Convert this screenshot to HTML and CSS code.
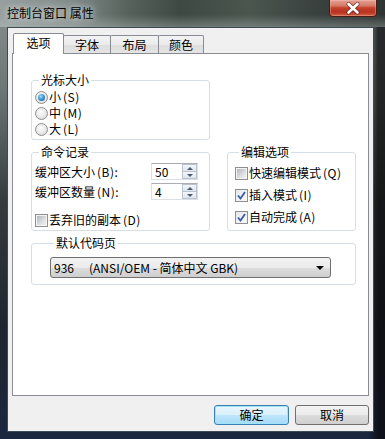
FILE: index.html
```html
<!DOCTYPE html>
<html lang="zh-CN">
<head>
<meta charset="utf-8">
<title>控制台窗口 属性</title>
<link rel="stylesheet" href="styles.css">
</head>
<body>
<div class="window">
  <div class="titlebar">
    <span class="title">控制台窗口 属性</span>
    <div class="close">
      <svg width="46" height="17" viewBox="0 0 46 17">
        <path d="M18.5 4 L27.5 12.5 M27.5 4 L18.5 12.5" stroke="#3a1610" stroke-width="4.2" stroke-linecap="round" fill="none" opacity="0.6"/>
        <path d="M18.5 4 L27.5 12.5 M27.5 4 L18.5 12.5" stroke="#ffffff" stroke-width="2.6" stroke-linecap="round" fill="none"/>
      </svg>
    </div>
  </div>
  <div class="client">
    <div class="tabs">
      <div class="tab active">选项</div>
      <div class="tab w47">字体</div>
      <div class="tab w48">布局</div>
      <div class="tab w45">颜色</div>
    </div>
    <div class="panel">
      <fieldset class="group g-cursor">
        <legend>光标大小</legend>
        <div class="opt"><span class="radio checked"></span>小<span class="key">(S)</span></div>
        <div class="opt"><span class="radio"></span>中<span class="key">(M)</span></div>
        <div class="opt"><span class="radio"></span>大<span class="key">(L)</span></div>
      </fieldset>
      <fieldset class="group g-history">
        <legend>命令记录</legend>
        <div class="field">
          <span class="flabel">缓冲区大小<span class="key">(B)</span>:</span>
          <span class="spin"><span class="num">50</span><span class="arrows"><span class="half"><span class="tri up"></span></span><span class="half"><span class="tri down"></span></span></span></span>
        </div>
        <div class="field">
          <span class="flabel">缓冲区数量<span class="key">(N)</span>:</span>
          <span class="spin"><span class="num">4</span><span class="arrows"><span class="half"><span class="tri up"></span></span><span class="half"><span class="tri down"></span></span></span></span>
        </div>
        <div class="opt discard"><span class="check"></span>丢弃旧的副本<span class="key">(D)</span></div>
      </fieldset>
      <fieldset class="group g-edit">
        <legend>编辑选项</legend>
        <div class="opt erow"><span class="check"></span>快速编辑模式<span class="key">(Q)</span></div>
        <div class="opt erow"><span class="check checked"><svg width="9" height="9" viewBox="0 0 9 9"><path d="M1 4.5 L3.5 7.5 L8 1" stroke="#3a5aa8" stroke-width="1.8" fill="none"/></svg></span>插入模式<span class="key">(I)</span></div>
        <div class="opt erow"><span class="check checked"><svg width="9" height="9" viewBox="0 0 9 9"><path d="M1 4.5 L3.5 7.5 L8 1" stroke="#3a5aa8" stroke-width="1.8" fill="none"/></svg></span>自动完成<span class="key">(A)</span></div>
      </fieldset>
      <fieldset class="group g-codepage">
        <legend>默认代码页</legend>
        <div class="select"><span class="cp">936</span><span class="cpname">(ANSI/OEM - 简体中文 GBK)</span><span class="caret"></span></div>
      </fieldset>
    </div>
    <div class="buttons">
      <div class="btn default">确定</div>
      <div class="btn">取消</div>
    </div>
  </div>
</div>
</body>
</html>
```
FILE: styles.css
```css
html, body {
  margin: 0;
  padding: 0;
}
body {
  width: 385px;
  height: 439px;
  overflow: hidden;
  font-family: "Noto Sans CJK SC", "Noto Sans", sans-serif;
  font-size: 12px;
  color: #000;
  background: #1c2433;
}
.window {
  width: 385px;
  height: 439px;
  display: flex;
  flex-direction: column;
  background:
    linear-gradient(to right, rgba(0,0,0,0) 0, rgba(0,0,0,0) 368px, rgba(10,10,12,0.75) 378px),
    linear-gradient(to bottom, #88918f 0, #6d7676 90px, #353b3e 200px, #1f2530 330px, #1b2740 100%);
}
.titlebar {
  height: 27px;
  flex: none;
  display: flex;
  justify-content: space-between;
  align-items: flex-start;
  padding: 0 8px 0 6px;
  background:
    linear-gradient(to bottom, rgba(255,255,255,0) 55%, rgba(190,200,198,0.35) 100%),
    linear-gradient(to right, #97a09f 0, #828c8a 70px, #56615b 130px, #3e4943 180px, #4b564f 250px, #3b4341 310px, #2e3432 100%);
}
.title {
  line-height: 26px;
  padding-left: 1px;
  text-shadow: 0 0 6px rgba(235,240,240,0.85), 0 0 10px rgba(235,240,240,0.6);
}
.close {
  width: 48px;
  height: 18px;
  box-sizing: border-box;
  margin-top: -1px;
  border: 1px solid #4a1c16;
  border-radius: 0 0 4px 4px;
  background: linear-gradient(to bottom, #e2a396 0, #d77a66 35%, #c2402c 50%, #b83221 75%, #d0603c 100%);
  box-shadow: inset 0 0 0 1px rgba(255,200,190,0.35);
  display: flex;
  align-items: center;
  justify-content: center;
}
.client {
  flex: 1;
  margin: 0 11px 7px 7px;
  background: #f0f0f0;
  border: 1px solid #3e4b55;
  display: flex;
  flex-direction: column;
}
.tabs {
  display: flex;
  align-items: flex-end;
  height: 21px;
  margin-top: 5px;
  padding-left: 4px;
}
.tab {
  box-sizing: border-box;
  height: 18px;
  margin-bottom: 1px;
  margin-left: -1px;
  border: 1px solid #898c95;
  border-bottom: none;
  border-radius: 2px 2px 0 0;
  background: linear-gradient(to bottom, #f3f3f3 0, #ebebeb 50%, #dddddd 51%, #e4e4e4 100%);
  text-align: center;
  line-height: 17px;
}
.tab.active {
  width: 51px;
  height: 21px;
  margin-bottom: 0;
  margin-left: 1px;
  background: #fff;
  line-height: 17px;
  position: relative;
  z-index: 1;
}
.w47 { width: 48px; }
.w48 { width: 49px; }
.w45 { width: 46px; }
.panel {
  height: 343px;
  box-sizing: border-box;
  margin: -1px 4px 0 4px;
  background: #fff;
  border: 1px solid #898c95;
  display: grid;
  grid-template-columns: 179px 129px;
  grid-template-rows: 66px 85px 48px;
  column-gap: 17px;
  row-gap: 6px;
  padding: 20px 0 0 18px;
  align-content: start;
}
.group {
  box-sizing: border-box;
  margin: 0;
  min-width: 0;
  border: 1px solid #d5dfe5;
  border-radius: 3px;
  padding: 0;
}
.group legend {
  padding: 0 2px;
  margin-left: 4px;
  line-height: 12px;
  height: 12px;
  font-size: 12px;
}
.g-cursor {
  grid-column: 1;
  grid-row: 1;
  padding: 3px 0 0 3px;
}
.g-history {
  grid-column: 1;
  grid-row: 2;
  padding: 5px 0 0 3px;
}
.g-edit {
  grid-column: 2;
  grid-row: 2;
  padding: 7px 0 0 7px;
}
.g-codepage {
  grid-column: 1 / span 2;
  grid-row: 3;
  padding: 8px 0 0 18px;
}
.key {
  margin-left: 2px;
  letter-spacing: 0.5px;
}
.opt {
  display: flex;
  align-items: center;
  height: 16px;
  line-height: 16px;
  white-space: nowrap;
}
.radio {
  width: 13px;
  height: 13px;
  box-sizing: border-box;
  border-radius: 50%;
  border: 1px solid #8e8f8f;
  background: radial-gradient(circle at 45% 40%, #ffffff 0, #eeeeee 40%, #cfd1d3 100%);
  margin-right: 1px;
  display: flex;
  align-items: center;
  justify-content: center;
}
.radio.checked::after {
  content: "";
  width: 7px;
  height: 7px;
  border-radius: 50%;
  background: radial-gradient(circle at 40% 35%, #a4e2f8 0, #3d9ad6 45%, #14568f 100%);
}
.field {
  display: flex;
  align-items: center;
  height: 17px;
  margin-bottom: 3px;
}
.flabel {
  width: 116px;
  white-space: nowrap;
}
.spin {
  display: flex;
  width: 47px;
  height: 17px;
  box-sizing: border-box;
  border: 1px solid #dbdfe6;
  border-top-color: #abadb3;
  background: #fff;
}
.num {
  flex: 1;
  line-height: 15px;
  padding-left: 3px;
}
.arrows {
  width: 15px;
  display: flex;
  flex-direction: column;
}
.half {
  flex: 1;
  box-sizing: border-box;
  border: 1px solid #b9c3cf;
  background: linear-gradient(to bottom, #f4f6f8, #dfe5ec);
  display: flex;
  align-items: center;
  justify-content: center;
}
.half + .half {
  border-top: none;
}
.tri {
  width: 0;
  height: 0;
  border-left: 3px solid transparent;
  border-right: 3px solid transparent;
}
.tri.up { border-bottom: 3px solid #4a5a70; }
.tri.down { border-top: 3px solid #4a5a70; }
.check {
  width: 13px;
  height: 13px;
  box-sizing: border-box;
  border: 1px solid #8e8f8f;
  background: #f4f4f4;
  margin-right: 1px;
  padding: 1px;
  display: flex;
  align-items: center;
  justify-content: center;
  flex: none;
}
.check::before {
  content: "";
  width: 9px;
  height: 9px;
  background: linear-gradient(135deg, #b4b8bd 0, #dcdee0 60%, #f0f0f0 100%);
}
.check.checked::before {
  display: none;
}
.check.checked {
  background: linear-gradient(135deg, #e6e8ea, #fafafa);
}
.discard {
  margin-top: 12px;
}
.erow {
  margin-bottom: 6px;
}
.select {
  width: 281px;
  height: 21px;
  box-sizing: border-box;
  border: 1px solid #707070;
  border-radius: 3px;
  background: linear-gradient(to bottom, #f2f2f2 0, #ebebeb 50%, #dddddd 51%, #cfcfcf 100%);
  display: flex;
  align-items: center;
  padding-left: 3px;
  white-space: nowrap;
}
.cp {
  margin-right: 15px;
}
.cpname {
  flex: 1;
}
.caret {
  width: 0;
  height: 0;
  border-left: 4px solid transparent;
  border-right: 4px solid transparent;
  border-top: 4px solid #000;
  margin-right: 6px;
}
.buttons {
  display: flex;
  justify-content: flex-end;
  gap: 6px;
  padding: 9px 4px 0 0;
}
.btn {
  width: 74px;
  height: 20px;
  box-sizing: border-box;
  border: 1px solid #707070;
  border-radius: 3px;
  background: linear-gradient(to bottom, #f2f2f2 0, #ebebeb 50%, #dddddd 51%, #cfcfcf 100%);
  text-align: center;
  line-height: 18px;
}
.btn.default {
  width: 75px;
  border-color: #3c7fb1;
  background: linear-gradient(to bottom, #eaf6fd 0, #d9f0fc 50%, #bee6fd 51%, #a7d9f5 100%);
  box-shadow: inset 0 0 0 1px #9fe3f8;
}
```
